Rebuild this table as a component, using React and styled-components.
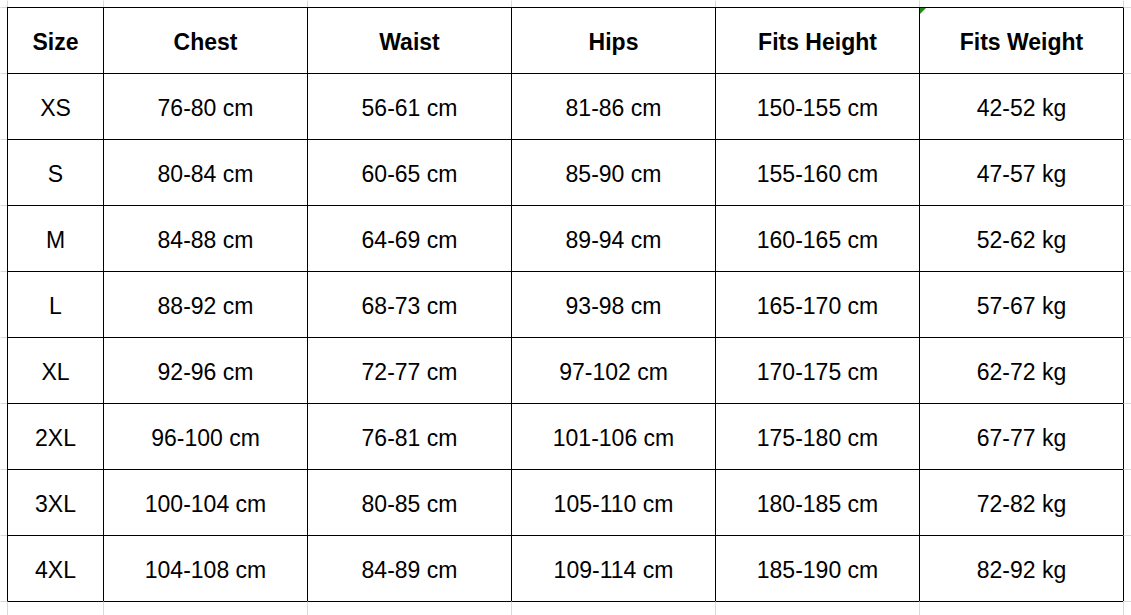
import React from "react";
import styled, { createGlobalStyle } from "styled-components";

//#region Styled Components
const GlobalStyle = createGlobalStyle`
  html, body {
    margin: 0;
    padding: 0;
    background: #ffffff;
  }
  body {
    font-family: "Liberation Sans", Arial, sans-serif;
    color: #000000;
  }
`;

const GRID = "#d9d9d9";
const INK = "#000000";

const Sheet = styled.div`
  display: grid;
  grid-template-columns: 7px 96px repeat(5, 204px) 1fr;
  grid-template-rows: 7px repeat(9, 66px) 1fr;
  width: 1131px;
  height: 615px;
  overflow: hidden;
  background: #ffffff;
`;

const Cell = styled.div`
  position: relative;
  box-sizing: border-box;
  display: flex;
  justify-content: center;
  align-items: center;
  border-left: 1px solid ${props => props.left || "transparent"};
  border-top: 1px solid ${props => props.top || "transparent"};
  font-size: 23px;
  font-weight: ${props => (props.head ? 700 : 400)};
  white-space: nowrap;
  padding-top: 3px;

  ${props =>
    props.marker &&
    `
    &::before {
      content: "";
      position: absolute;
      left: 0;
      top: 0;
      width: 0;
      height: 0;
      border-top: 6px solid #1e8c1e;
      border-right: 6px solid transparent;
    }
  `}
`;
//#endregion

const header = ["Size", "Chest", "Waist", "Hips", "Fits Height", "Fits Weight"];

const rows = [
  ["XS", "76-80 cm", "56-61 cm", "81-86 cm", "150-155 cm", "42-52 kg"],
  ["S", "80-84 cm", "60-65 cm", "85-90 cm", "155-160 cm", "47-57 kg"],
  ["M", "84-88 cm", "64-69 cm", "89-94 cm", "160-165 cm", "52-62 kg"],
  ["L", "88-92 cm", "68-73 cm", "93-98 cm", "165-170 cm", "57-67 kg"],
  ["XL", "92-96 cm", "72-77 cm", "97-102 cm", "170-175 cm", "62-72 kg"],
  ["2XL", "96-100 cm", "76-81 cm", "101-106 cm", "175-180 cm", "67-77 kg"],
  ["3XL", "100-104 cm", "80-85 cm", "105-110 cm", "180-185 cm", "72-82 kg"],
  ["4XL", "104-108 cm", "84-89 cm", "109-114 cm", "185-190 cm", "82-92 kg"],
];

const table = [header, ...rows];
const ROWS = table.length + 2;
const COLS = header.length + 2;

// colour of a cell's left / top line in the sheet grid
const lineColor = (r, c, side) => {
  const inRow = i => i >= 1 && i <= table.length;
  const inCol = i => i >= 1 && i <= header.length;
  if (side === "left") {
    if (c === 0) return null;
    if (inRow(r) && (inCol(c) || inCol(c - 1))) return INK;
    return GRID;
  }
  if (r === 0) return null;
  if (inCol(c) && (inRow(r) || inRow(r - 1))) return INK;
  return GRID;
};

const App = () => {
  const cells = [];
  for (let r = 0; r < ROWS; r++) {
    for (let c = 0; c < COLS; c++) {
      const data = table[r - 1] && table[r - 1][c - 1];
      const text = c >= 1 && c <= header.length ? data : null;
      cells.push(
        <Cell
          key={`${r}-${c}`}
          left={lineColor(r, c, "left")}
          top={lineColor(r, c, "top")}
          head={r === 1}
          marker={r === 1 && c === header.length}
        >
          {text}
        </Cell>
      );
    }
  }

  return (
    <>
      <GlobalStyle />
      <Sheet>{cells}</Sheet>
    </>
  );
};

export default App;
